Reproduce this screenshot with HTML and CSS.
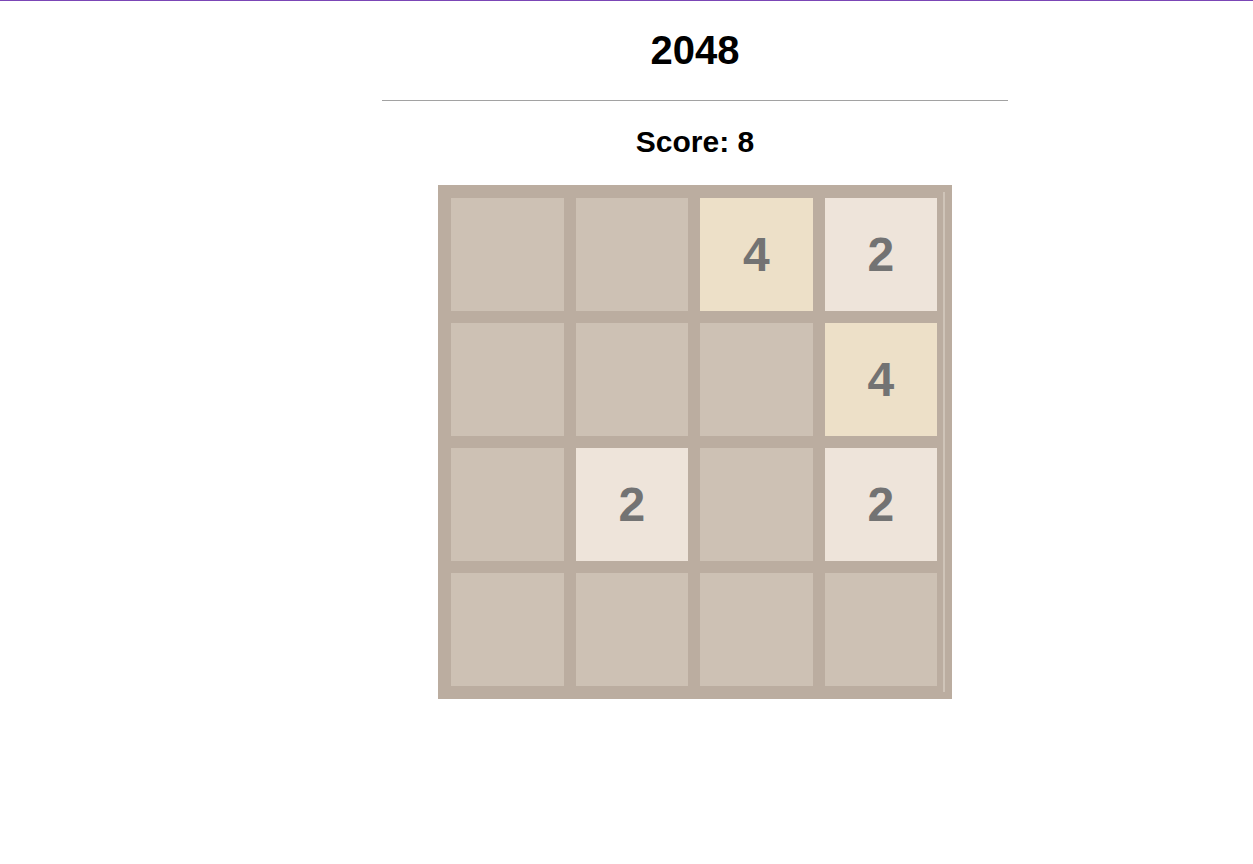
FILE: index.html
```html
<!DOCTYPE html>
<html>
<head>
<meta charset="utf-8">
<title>2048</title>
<link rel="stylesheet" href="styles.css">
</head>
<body>
<div class="top-line"></div>
<main class="page">
  <h1 class="title">2048</h1>
  <hr class="divider">
  <h2 class="score">Score: 8</h2>
  <div class="board">
    <div class="grid">
      <div class="cell"></div>
      <div class="cell"></div>
      <div class="cell t4">4</div>
      <div class="cell t2">2</div>
      <div class="cell"></div>
      <div class="cell"></div>
      <div class="cell"></div>
      <div class="cell t4">4</div>
      <div class="cell"></div>
      <div class="cell t2">2</div>
      <div class="cell"></div>
      <div class="cell t2">2</div>
      <div class="cell"></div>
      <div class="cell"></div>
      <div class="cell"></div>
      <div class="cell"></div>
    </div>
    <div class="edge"></div>
  </div>
</main>
</body>
</html>
```

FILE: styles.css
```css
html, body {
  margin: 0;
  padding: 0;
  background: #ffffff;
}

body {
  font-family: "Liberation Sans", Arial, sans-serif;
  color: #000;
}

.top-line {
  height: 1px;
  background: #7b46b6;
}

.page {
  margin-left: 382px;
  width: 626px;
  display: flex;
  flex-direction: column;
  align-items: center;
}

.title {
  margin: 25px 0 0;
  font-size: 40px;
  line-height: 48px;
  font-weight: bold;
}

.divider {
  align-self: stretch;
  margin: 26px 0 0;
  height: 0;
  border: 0;
  border-top: 1px solid #a2a2a2;
}

.score {
  margin: 24px 0 0;
  font-size: 30px;
  line-height: 34px;
  font-weight: bold;
}

.board {
  position: relative;
  margin-top: 26px;
  background: #bbada0;
  padding: 13px 15px 13px 13px;
}

.grid {
  width: 486px;
  display: grid;
  grid-template-columns: repeat(4, 1fr);
  grid-auto-rows: 113px;
  gap: 12px;
}

.cell {
  background: #cdc1b4;
  display: flex;
  align-items: center;
  justify-content: center;
  font-size: 48px;
  font-weight: bold;
  color: #737373;
}

.cell.t2 {
  background: #eee4da;
}

.cell.t4 {
  background: #ede0c8;
}

.edge {
  position: absolute;
  left: 505px;
  top: 7px;
  width: 2px;
  height: 500px;
  background: #cfc4b8;
}
```
